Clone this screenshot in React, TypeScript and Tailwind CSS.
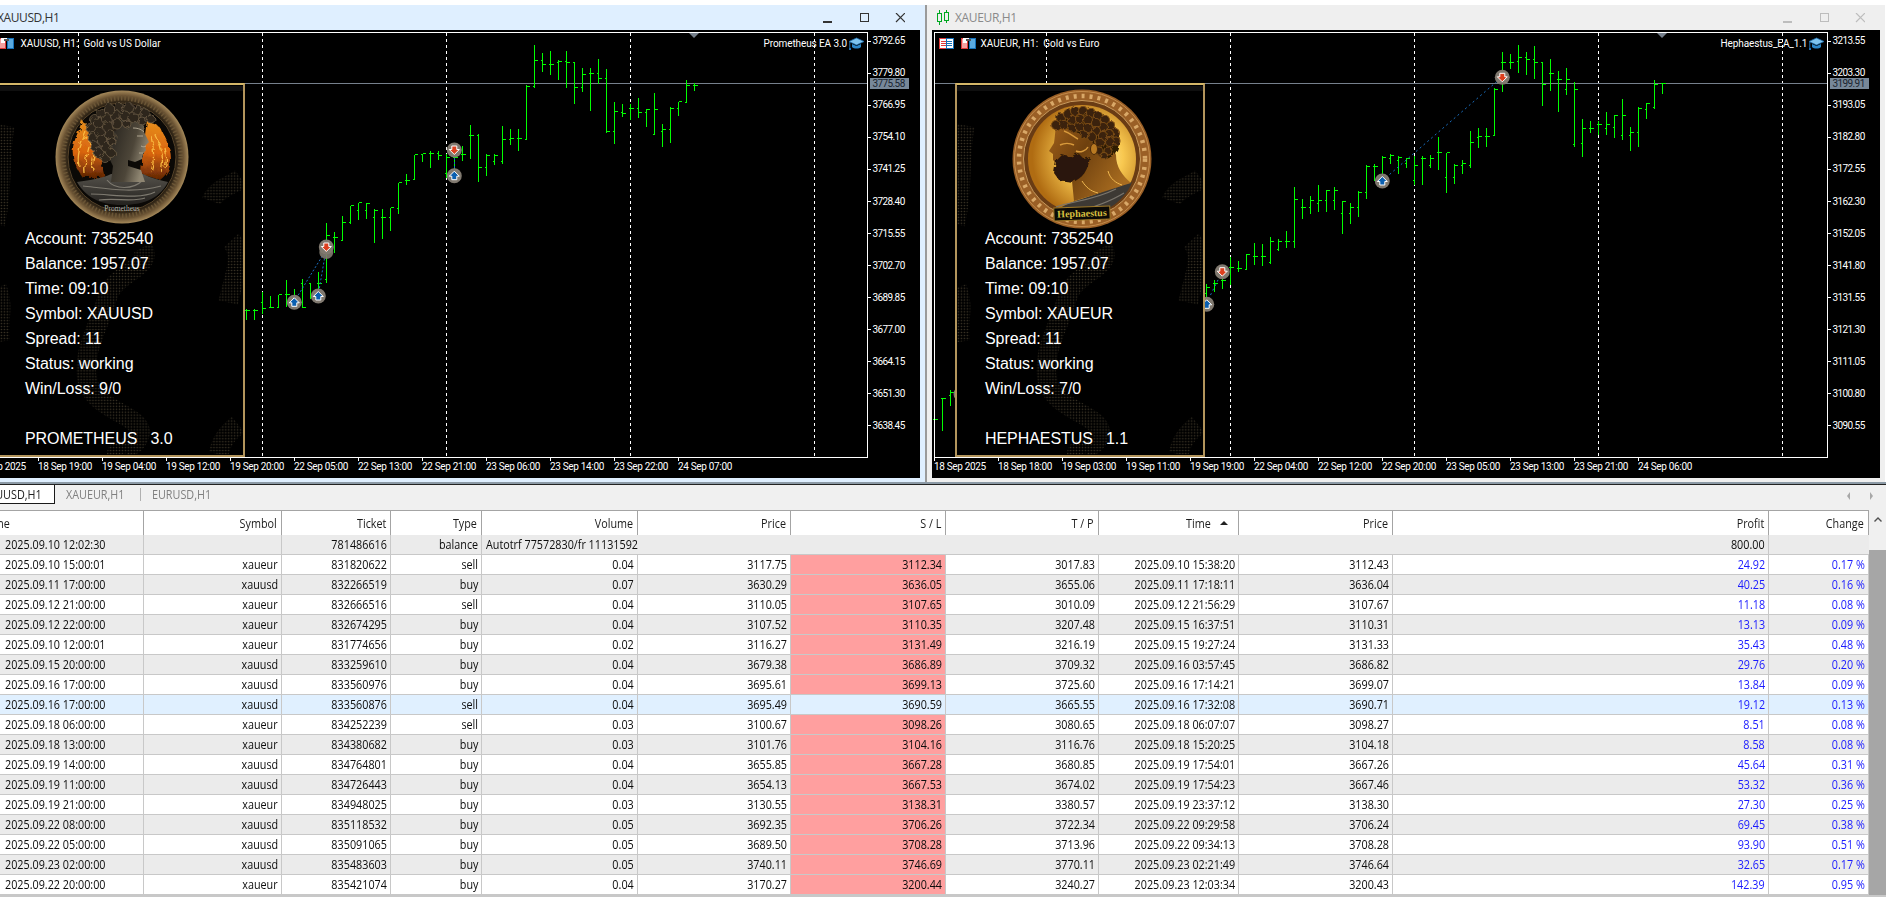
import React from "react";

type Bar = [number, number, number, number];

const leftBars: Bar[] = [
  [245,270,256,256],[237,307,305,255],[303,345,325,304],[318,425,388,325],[370,437,394,388],[276,403,403,326],[325,377,335,328],[292,352,325,337],[310,357,325,325],[310,347,335,340],[304,428,392,333],[205,395,235,392],[175,250,220,235],[200,329,220,220],[202,272,262,222],[182,308,186,262],[151,261,184,186],[178,236,186,184],[151,221,192,192],[156,212,180,192],[132,260,258,181],[252,417,416,258],[385,449,414,414],[385,431,418,414],[376,490,482,418],[460,491,482,465],[460,525,502,465],[400,542,405,502],[372,473,405,405],
  [435,480,462,462],[465,540,470,470],[460,530,520,470],[450,478,460,465],[450,500,460,460],[458,482,463,460],[463,538,538,463],[520,553,540,540],[545,638,625,545],[620,690,650,622],[625,713,650,650],[625,725,650,630],[605,655,630,608],[605,658,630,605],[615,670,665,615],[646,720,720,665],[693,755,712,712],[665,847,838,705],[813,865,850,850],[845,895,850,890],[835,922,850,922],[865,925,900,900],[838,918,882,882],[882,922,920,882],[885,922,920,920],[872,938,905,925],[925,958,930,930],[925,957,930,930],
];

const rightBars: Bar[] = [
  [245,278,250,250],[237,323,322,252],[307,353,327,310],[318,437,395,325],[378,449,406,395],[295,418,406,345],[342,410,380,345],[333,401,385,372],[360,402,372,372],[360,395,385,385],[354,467,430,385],[243,437,432,268],[202,282,268,238],[210,332,238,238],[175,270,218,218],[185,315,185,252],[135,233,178,185],[153,221,170,178],[132,215,184,170],[160,203,185,185],[153,272,187,187],[262,405,405,268],[382,437,407,407],[382,440,410,407],[390,500,495,425],[478,518,495,490],[490,548,532,495],[455,575,532,456],[408,506,456,456],[463,502,495,475],[465,552,475,475],[465,553,540,495],[470,500,490,475],
  [465,518,480,470],[460,490,475,465],[465,540,530,472],[490,540,498,498],[492,593,575,498],[570,648,620,575],[605,670,640,620],[600,700,640,603],[558,628,600,570],[568,632,600,570],[552,632,610,600],[585,640,620,600],[595,655,620,620],[558,740,722,598],[690,740,722,722],[715,750,748,722],[708,788,785,722],[730,795,768,768],[725,792,768,768],[760,808,808,762],[780,812,805,805],[768,852,800,800],[815,865,840,840],[838,872,850,850],[850,895,880,860],
];

const rightFarBars: Bar[] = [[1168,1215,1185,1175],[1192,1290,1195,1195],[1250,1290,1258,1258]];

const leftY = ["3792.65","3779.80","3766.95","3754.10","3741.25","3728.40","3715.55","3702.70","3689.85","3677.00","3664.15","3651.30","3638.45"];
const rightY = ["3213.55","3203.30","3193.05","3182.80","3172.55","3162.30","3152.05","3141.80","3131.55","3121.30","3111.05","3100.80","3090.55"];
const leftX = ["18 Sep 2025","18 Sep 19:00","19 Sep 04:00","19 Sep 12:00","19 Sep 20:00","22 Sep 05:00","22 Sep 13:00","22 Sep 21:00","23 Sep 06:00","23 Sep 14:00","23 Sep 22:00","24 Sep 07:00"];
const rightX = ["18 Sep 2025","18 Sep 18:00","19 Sep 03:00","19 Sep 11:00","19 Sep 19:00","22 Sep 04:00","22 Sep 12:00","22 Sep 20:00","23 Sep 05:00","23 Sep 13:00","23 Sep 21:00","24 Sep 06:00"];

const rows: string[][] = [
  ["2025.09.10 12:02:30","","781486616","balance","Autotrf 77572830/fr 11131592","","","","","","800.00",""],
  ["2025.09.10 15:00:01","xaueur","831820622","sell","0.04","3117.75","3112.34","3017.83","2025.09.10 15:38:20","3112.43","24.92","0.17 %"],
  ["2025.09.11 17:00:00","xauusd","832266519","buy","0.07","3630.29","3636.05","3655.06","2025.09.11 17:18:11","3636.04","40.25","0.16 %"],
  ["2025.09.12 21:00:00","xaueur","832666516","sell","0.04","3110.05","3107.65","3010.09","2025.09.12 21:56:29","3107.67","11.18","0.08 %"],
  ["2025.09.12 22:00:00","xaueur","832674295","buy","0.04","3107.52","3110.35","3207.48","2025.09.15 16:37:51","3110.31","13.13","0.09 %"],
  ["2025.09.10 12:00:01","xaueur","831774656","buy","0.02","3116.27","3131.49","3216.19","2025.09.15 19:27:24","3131.33","35.43","0.48 %"],
  ["2025.09.15 20:00:00","xauusd","833259610","buy","0.04","3679.38","3686.89","3709.32","2025.09.16 03:57:45","3686.82","29.76","0.20 %"],
  ["2025.09.16 17:00:00","xauusd","833560976","buy","0.04","3695.61","3699.13","3725.60","2025.09.16 17:14:21","3699.07","13.84","0.09 %"],
  ["2025.09.16 17:00:00","xauusd","833560876","sell","0.04","3695.49","3690.59","3665.55","2025.09.16 17:32:08","3690.71","19.12","0.13 %"],
  ["2025.09.18 06:00:00","xaueur","834252239","sell","0.03","3100.67","3098.26","3080.65","2025.09.18 06:07:07","3098.27","8.51","0.08 %"],
  ["2025.09.18 13:00:00","xaueur","834380682","buy","0.03","3101.76","3104.16","3116.76","2025.09.18 15:20:25","3104.18","8.58","0.08 %"],
  ["2025.09.19 14:00:00","xauusd","834764801","buy","0.04","3655.85","3667.28","3680.85","2025.09.19 17:54:01","3667.26","45.64","0.31 %"],
  ["2025.09.19 11:00:00","xauusd","834726443","buy","0.04","3654.13","3667.53","3674.02","2025.09.19 17:54:23","3667.46","53.32","0.36 %"],
  ["2025.09.19 21:00:00","xaueur","834948025","buy","0.03","3130.55","3138.31","3380.57","2025.09.19 23:37:12","3138.30","27.30","0.25 %"],
  ["2025.09.22 08:00:00","xauusd","835118532","buy","0.05","3692.35","3706.26","3722.34","2025.09.22 09:29:58","3706.24","69.45","0.38 %"],
  ["2025.09.22 05:00:00","xauusd","835091065","buy","0.05","3689.50","3708.28","3713.96","2025.09.22 09:34:13","3708.28","93.90","0.51 %"],
  ["2025.09.23 02:00:00","xauusd","835483603","buy","0.05","3740.11","3746.69","3770.11","2025.09.23 02:21:49","3746.64","32.65","0.17 %"],
  ["2025.09.22 20:00:00","xaueur","835421074","buy","0.04","3170.27","3200.44","3240.27","2025.09.23 12:03:34","3200.43","142.39","0.95 %"],
];

const headers = ["Time","Symbol","Ticket","Type","Volume","Price","S / L","T / P","Time","Price","Profit","Change"];
const grid = "grid grid-cols-[144px_138px_109px_91px_156px_153px_155px_153px_140px_154px_376px_100px]";

function Bars({ x0, data }: { x0: number; data: Bar[] }) {
  return (
    <g stroke="#00ff00" strokeWidth="1" shapeRendering="crispEdges">
      {data.map((b, i) => {
        const x = x0 - i * 8 + 0.5;
        const [h, l, o, c] = b.map((v) => Math.round(v / 3) + 0.5);
        return <path key={i} d={`M${x} ${h}V${l}M${x - 2} ${o}H${x}M${x} ${c}H${x + 3}`} />;
      })}
    </g>
  );
}

function Marker({ x, y, kind }: { x: number; y: number; kind: "buy" | "sell" }) {
  return (
    <g transform={`translate(${x} ${y})`}>
      <circle r="7.5" fill="#80796f" />
      {kind === "sell" ? (
        <polygon points="-2.5,-4 2.5,-4 2.5,-0.5 5,-0.5 0,4.5 -5,-0.5 -2.5,-0.5" fill="#dc3f1e" stroke="#ffffff" strokeWidth="1" />
      ) : (
        <polygon points="-2.5,4 2.5,4 2.5,0.5 5,0.5 0,-4.5 -5,0.5 -2.5,0.5" fill="#0a5fb0" stroke="#ffffff" strokeWidth="1" />
      )}
    </g>
  );
}

function Hat({ x, y }: { x: number; y: number }) {
  return (
    <g transform={`translate(${x} ${y})`}>
      <polygon points="7.5,0 15,3.5 7.5,7 0,3.5" fill="#7fc4ee" stroke="#1d6fb0" strokeWidth="0.8" />
      <path d="M3 6V9C5 11 10 11 12 9V6L7.5 8Z" fill="#2b86c8" />
      <path d="M0.8 4V10" stroke="#1d6fb0" strokeWidth="1" />
      <rect x="0" y="10" width="2" height="2" fill="#1d6fb0" />
    </g>
  );
}

function PairIcon({ x, y }: { x: number; y: number }) {
  return (
    <g transform={`translate(${x} ${y})`} shapeRendering="crispEdges">
      <rect x="0.5" y="0.5" width="6" height="10" fill="#f4a0a0" stroke="#e03a3a" />
      <rect x="2" y="0" width="4" height="5" fill="#ffffff" />
      <rect x="4" y="0" width="7" height="3" fill="#ffffff" />
      <rect x="8.5" y="0.5" width="6" height="10" fill="#5aaae0" stroke="#1470b8" />
      <rect x="5" y="1" width="5" height="2" fill="#555555" />
    </g>
  );
}

function TableIcon({ x, y }: { x: number; y: number }) {
  return (
    <g transform={`translate(${x} ${y})`} shapeRendering="crispEdges">
      <rect x="0.5" y="0.5" width="7" height="10" fill="#ffffff" stroke="#e03a3a" />
      <rect x="7.5" y="0.5" width="7" height="10" fill="#ffffff" stroke="#1470b8" />
      <path d="M2 3.5H7M2 5.5H7M2 7.5H7" stroke="#e03a3a" />
      <path d="M8 3.5H13M8 5.5H13M8 7.5H13" stroke="#1470b8" />
    </g>
  );
}

function Chart({
  vb, plotLeft, plotRight, dashes, yLabels, xLabels, xTicks, price, title, titleX, ea, eaX, hatX, tri, children,
}: {
  vb: string; plotLeft: number; plotRight: number; dashes: number[]; yLabels: string[]; xLabels: string[]; xTicks: number[];
  price: string; title: string; titleX: number; ea: string; eaX: number; hatX: number; tri: number; children: React.ReactNode;
}) {
  const axisFont = "font-['Roboto'] text-[10px] fill-white";
  return (
    <svg viewBox={vb} className="absolute inset-0 w-full h-full">
      <g stroke="#ffffff" strokeDasharray="3 3" shapeRendering="crispEdges">
        {dashes.map((x) => (
          <path key={x} d={`M${x + 0.5} 33V456`} />
        ))}
      </g>
      <path d={`M${plotLeft} 83.5H${plotRight}`} stroke="#76808c" shapeRendering="crispEdges" />
      {children}
      <polygon points={`${tri - 5},33 ${tri + 5},33 ${tri},38`} fill="#76808c" />
      <g stroke="#ffffff" fill="none" shapeRendering="crispEdges">
        <path d={`M${plotLeft} 32.5H${plotRight + 0.5}V457.5H${plotLeft}`} />
        {plotLeft > 100 && <path d={`M${plotLeft + 0.5} 32V458`} />}
        {yLabels.map((_, i) => (
          <path key={i} d={`M${plotRight} ${Math.round(40.5 + i * 32.07) + 0.5}h4`} />
        ))}
        {xTicks.map((x) => (
          <path key={x} d={`M${x + 0.5} 458v3`} />
        ))}
      </g>
      {yLabels.map((t, i) => (
        <text key={t} x={plotRight + 5.5} y={40.5 + i * 32.07 + 3.7} className={`${axisFont} tracking-[-0.6px]`}>{t}</text>
      ))}
      {xLabels.map((t, i) => (
        <text key={t} x={xTicks[i]} y={469.7} className={`${axisFont} tracking-[-0.33px]`}>{t}</text>
      ))}
      <rect x={plotRight + 3} y="78" width="39" height="11" fill="#778899" />
      <text x={plotRight + 5.5} y="87.2" className="font-['Roboto'] text-[10px] tracking-[-0.6px] fill-[#1a2430]">{price}</text>
      <text x={titleX} y="47" className="font-['Roboto'] text-[10px] fill-white tracking-[0.05px]">{title}</text>
      <text x={eaX} y="47" className="font-['Roboto'] text-[10px] fill-white tracking-[-0.1px]">{ea}</text>
      <Hat x={hatX} y={38} />
    </svg>
  );
}

function WaveDecor({ id }: { id: string }) {
  const paths = [
    "M148 164C160 185 118 190 112 215S85 270 92 300S150 335 145 354S120 365 122 375",
    "M238 157C252 172 240 195 235 220",
    "M245 344C235 352 228 360 225 374",
    "M218 117C222 105 240 100 248 94",
    "M0 205C8 225 0 240 3 260",
    "M8 40C2 70 6 110 -2 140",
  ];
  return (
    <svg viewBox="0 0 250 374" className="absolute inset-0 w-full h-full" fill="none">
      <defs>
        <pattern id={id} width="3" height="3" patternUnits="userSpaceOnUse">
          <circle cx="1.5" cy="1.5" r="0.8" fill="#6e6248" />
        </pattern>
      </defs>
      {paths.map((d) => (
        <path key={d} d={d} stroke={`url(#${id})`} strokeWidth="20" opacity="0.55" />
      ))}
      <rect x="0" y="0" width="250" height="5" fill="#111111" />
    </svg>
  );
}

const promHair: [number, number, number][] = [
  [40,30,5.5],[47,24,5.5],[55,20,5.5],[64,18,5.5],[73,18,5.5],[82,20,5],[90,24,5],[96,29,4],[37,38,5.5],[44,33,5.5],[52,29,5.5],[61,26,5.5],[70,26,5],[79,28,5],[87,31,4],[38,47,5.5],[45,42,5.5],[53,37,5.5],[62,34,5],[72,34,4],[40,56,5],[47,50,5.5],[55,45,5],[44,63,5],[51,57,5],[50,68,4.5],[56,63,4.5],[57,52,4],
];

function PromCoin() {
  return (
    <svg viewBox="0 0 134 134" className="absolute left-[58px] top-[5px] w-[134px] h-[134px]">
      <defs>
        <radialGradient id="pr" cx="50%" cy="50%" r="50%">
          <stop offset="80%" stopColor="#1e170d" />
          <stop offset="92%" stopColor="#6a5233" />
          <stop offset="100%" stopColor="#a5895a" />
        </radialGradient>
        <linearGradient id="pf" x1="0" y1="0" x2="0" y2="1">
          <stop offset="0%" stopColor="#e8901c" />
          <stop offset="55%" stopColor="#d8640f" />
          <stop offset="100%" stopColor="#5e2404" />
        </linearGradient>
        <linearGradient id="pd" x1="0" y1="0" x2="1" y2="0.4">
          <stop offset="0%" stopColor="#1e1b17" />
          <stop offset="70%" stopColor="#4d4639" />
          <stop offset="100%" stopColor="#8f8672" />
        </linearGradient>
        <linearGradient id="pc" x1="0" y1="0" x2="0" y2="1">
          <stop offset="0%" stopColor="#55524b" />
          <stop offset="100%" stopColor="#24221f" />
        </linearGradient>
        <filter id="rough" x="-10%" y="-10%" width="120%" height="120%">
          <feTurbulence type="fractalNoise" baseFrequency="0.18" numOctaves="2" seed="4" />
          <feDisplacementMap in="SourceGraphic" scale="6" />
        </filter>
      </defs>
      <circle cx="67" cy="67" r="66.5" fill="url(#pr)" />
      <circle cx="67" cy="67" r="59" fill="none" stroke="#6b5636" strokeWidth="5" strokeDasharray="1.5 2" />
      <circle cx="67" cy="67" r="54" fill="#0b0906" stroke="#57442a" strokeWidth="1" />
      <g filter="url(#rough)">
        <path d="M18 66C16 52 24 44 27 30C31 38 34 34 38 30L46 72L50 88L28 88C24 82 19 76 18 66Z" fill="url(#pf)" />
        <path d="M24 76C21 64 27 52 31 42M30 84C28 70 35 60 36 46M38 80C36 70 40 62 42 56" stroke="#f8b840" strokeWidth="1.3" fill="none" />
        <path d="M92 30C98 36 104 32 107 42C114 54 118 66 115 76C113 82 110 86 105 90L86 84L88 60Z" fill="url(#pf)" />
        <path d="M100 44C105 54 110 66 106 82M96 46C99 58 100 70 96 82M110 58C112 66 112 72 110 78" stroke="#f8b840" strokeWidth="1.3" fill="none" />
      </g>
      <path d="M22 92C36 90 48 88 56 84L88 84C96 88 104 90 113 92C106 106 92 115 67 115C44 115 30 106 22 92Z" fill="url(#pc)" />
      <path d="M28 96C48 98 78 104 106 96M36 104C56 104 84 110 100 102M52 90C60 100 78 100 88 90M44 110C60 108 80 112 90 108" stroke="#7e7a70" strokeWidth="1.2" fill="none" />
      <path d="M62 28L84 30L89 36L89 42L94 52L90 56L91 60L88 64L87 69L80 72L73 70L73 76L86 80L90 92L56 92L58 76L50 60Z" fill="url(#pd)" />
      <path d="M78 38C84 38 87 40 89 42M82 46C84 46 86 46 88 46M86 56C88 57 89 57 91 56M84 63C86 63 87 63 88 63" stroke="#b8ae98" strokeWidth="0.9" fill="none" />
      <g filter="url(#rough)">
        <path d="M36 40C38 24 56 14 72 14C86 14 96 22 99 30L86 32L66 30L60 42L56 62L50 70L42 66C36 58 34 50 36 40Z" fill="#2a2219" />
        {promHair.map(([x, y, r]) => (
          <circle key={`${x}-${y}`} cx={x} cy={y} r={r} fill="#2d251b" stroke="#6e5e48" strokeWidth="0.8" />
        ))}
      </g>
      <text x="67" y="121" textAnchor="middle" className="font-['Liberation_Serif'] text-[7.5px] fill-[#b4b4ac]">Prometheus</text>
    </svg>
  );
}

const hephHair: [number, number, number][] = [
  [44,36,4.5],[49,29,4.5],[56,25,4.5],[63,22,4.5],[71,22,4.5],[79,24,4.5],[86,27,4.5],[93,31,4.5],[99,37,4.5],[103,44,4.5],[104,52,4],[52,36,4.5],[60,31,4.5],[68,30,4.5],[76,31,4.5],[84,34,4.5],[91,38,4.5],[97,45,4.5],[98,53,4.5],[96,62,4],[60,39,4],[68,38,4.5],[76,39,4.5],[84,42,4.5],[91,47,4.5],[72,46,4],[80,48,4.5],[88,54,4.5],[87,62,4],[92,67,3.5],
];

function HephCoin() {
  return (
    <svg viewBox="0 0 140 140" className="absolute left-[55px] top-[4px] w-[140px] h-[140px]">
      <defs>
        <radialGradient id="hc" cx="62%" cy="48%" r="58%">
          <stop offset="0%" stopColor="#fff2ae" />
          <stop offset="45%" stopColor="#f8c850" />
          <stop offset="100%" stopColor="#b06c12" />
        </radialGradient>
        <linearGradient id="hf" x1="0" y1="0" x2="1" y2="0.6">
          <stop offset="0%" stopColor="#a0601a" />
          <stop offset="45%" stopColor="#6e400e" />
          <stop offset="100%" stopColor="#a86c20" />
        </linearGradient>
        <filter id="roughh" x="-10%" y="-10%" width="120%" height="120%">
          <feTurbulence type="fractalNoise" baseFrequency="0.2" numOctaves="2" seed="7" />
          <feDisplacementMap in="SourceGraphic" scale="4" />
        </filter>
      </defs>
      <circle cx="70" cy="70" r="69.5" fill="#9a5f26" />
      <circle cx="70" cy="70" r="67.5" fill="none" stroke="#c48c4c" strokeWidth="1" />
      <circle cx="70" cy="70" r="63" fill="none" stroke="#d9a868" strokeWidth="4.5" strokeDasharray="3 5" />
      <circle cx="70" cy="70" r="58.5" fill="#6a3c14" stroke="#c99a5c" strokeWidth="1" />
      <circle cx="70" cy="70" r="54" fill="url(#hc)" />
      <path d="M44 122C56 112 74 110 96 100L120 93C114 110 96 124 72 128Z" fill="#3d3934" />
      <path d="M44 118C60 112 80 112 104 100M60 124C76 120 96 114 112 104" stroke="#7a756c" strokeWidth="1.2" fill="none" />
      <path d="M44 36C43 44 43 48 42 54L37 62L41 65L41 71L44 74L44 84L50 92L60 92L62 112C76 108 100 100 119 94C110 86 104 78 104 66L92 36Z" fill="url(#hf)" />
      <path d="M52 42C58 44 62 48 66 50M48 56C52 54 58 54 62 56M64 62C68 64 74 62 76 58" stroke="#d89a3c" strokeWidth="1.4" fill="none" />
      <path d="M70 92C74 98 78 102 86 104M96 82C98 90 104 94 110 96" stroke="#f0b850" strokeWidth="1" fill="none" />
      <g filter="url(#roughh)">
        <path d="M44 72L42 84L47 91L60 93C70 90 76 82 78 68L72 70L66 64L58 68L50 66Z" fill="#2c1808" />
        <path d="M41 37C44 26 58 20 72 20C90 22 104 34 107 50C108 60 102 68 94 70L86 66L80 52L70 46L58 40L44 40Z" fill="#2e1b06" />
        {hephHair.map(([x, y, r]) => (
          <circle key={`${x}-${y}`} cx={x} cy={y} r={r} fill="#3a2208" stroke="#7a4c16" strokeWidth="1.1" />
        ))}
      </g>
      <ellipse cx="82" cy="60" rx="3.5" ry="5.5" fill="#b97a22" stroke="#4a2a0a" />
      <g transform="rotate(-2 70 125)">
        <rect x="42" y="118" width="56" height="13" fill="#0b0a06" stroke="#a07a28" />
        <text x="70" y="127.7" textAnchor="middle" className="font-['Liberation_Serif'] text-[10px] font-bold fill-[#d8c040]">Hephaestus</text>
      </g>
    </svg>
  );
}

function Panel({ lines, left, id, children }: { lines: string[]; left: string; id: string; children: React.ReactNode }) {
  return (
    <div className={`absolute top-[53px] h-[374px] w-[250px] border-2 border-[#b3955c] border-t-[#d4b768] bg-black ${left}`}>
      <WaveDecor id={id} />
      {children}
      <div className="relative pl-[28px] pt-[141px] font-['Liberation_Sans'] text-[16px] leading-[25px] tracking-[-0.06px] text-white">
        {lines.map((l, i) => (
          <div key={i} className="h-[25px] whitespace-pre">{l}</div>
        ))}
      </div>
    </div>
  );
}

function WinBtns({ color }: { color: string }) {
  return (
    <svg viewBox="0 0 82 10" className="w-[82px] h-[10px]" fill="none" stroke={color} strokeWidth="1.2" shapeRendering="crispEdges">
      <path d="M0 9H9" />
      <rect x="37.5" y="0.5" width="8" height="8" />
      <path d="M73 0L82 9M82 0L73 9" shapeRendering="auto" />
    </svg>
  );
}

const squeezeL = "inline-block origin-left scale-x-[0.83] whitespace-nowrap";
const squeezeR = "inline-block origin-right scale-x-[0.83] whitespace-nowrap";

function Row({ r, i }: { r: string[]; i: number }) {
  const selected = i === 8;
  const bg = selected ? "bg-[#e0f0ff]" : i % 2 === 0 ? "bg-[#ebebeb]" : "bg-white";
  return (
    <div className={`${grid} h-[20px] border-b border-[#c8c8c8] ${bg}`}>
      {r.map((c, j) => {
        const pink = j === 6 && i !== 0 && !selected;
        const blue = (j === 10 || j === 11) && i !== 0;
        const auto = i === 0 && j === 4;
        const base = `h-[19px] leading-[19px] border-r border-[#c8c8c8] ${blue ? "text-[#1a1aff]" : "text-[#0c0c0c]"} ${pink ? "bg-[#ff9f9f]" : ""}`;
        if (j === 0) {
          return (
            <div key={j} className={`${base} pl-[5px]`}>
              <span className={squeezeL}>{c}</span>
            </div>
          );
        }
        if (auto) {
          return (
            <div key={j} className="h-[19px] leading-[19px] pl-[4px] text-[#0c0c0c] relative z-10">
              <span className={squeezeL}>{c}</span>
            </div>
          );
        }
        return (
          <div key={j} className={`${base} text-right pr-[3px] ${i === 0 && j > 4 && j !== 10 ? "border-r-0" : ""}`}>
            <span className={squeezeR}>{c}</span>
          </div>
        );
      })}
    </div>
  );
}

export default function App() {
  const leftXTicks = Array.from({ length: 12 }, (_, i) => -26 + i * 64);
  const rightXTicks = Array.from({ length: 12 }, (_, i) => 934 + i * 64);
  return (
    <div className="w-[1886px] h-[897px] overflow-hidden bg-white flex flex-col font-['Open_Sans'] text-[13px]">
      <div className="h-[5px] shrink-0" />
      <div className="flex h-[477px] shrink-0">
        <div className="w-[925px] flex flex-col bg-[#dfefff]">
          <div className="h-[25px] flex items-center justify-between pr-[20px] pl-[0px]">
            <span className="ml-[-3px] text-[12px] tracking-[-0.4px] text-[#333333]">XAUUSD,H1</span>
            <WinBtns color="#333333" />
          </div>
          <div className="relative w-[920px] h-[448px] bg-black overflow-hidden">
            <Chart
              vb="0 30 920 448" plotLeft={0} plotRight={867} dashes={[78, 262, 446, 630, 814]} yLabels={leftY} xLabels={leftX} xTicks={leftXTicks}
              price="3775.58" title={"XAUUSD, H1:\u00a0\u00a0Gold vs US Dollar"} titleX={20.5} ea="Prometheus EA 3.0" eaX={763.5} hatX={849} tri={694}
            >
              <Bars x0={694} data={leftBars} />
              <path d="M294 302L326 250M318 296L326 250M454.5 150V176" stroke="#1a6fc0" strokeDasharray="2 2" fill="none" />
              <Marker x={454.3} y={150} kind="sell" />
              <Marker x={454.3} y={175.7} kind="buy" />
              <circle cx="326.3" cy="252" r="7" fill="#80796f" opacity="0.9" />
              <Marker x={326.3} y={247} kind="sell" />
              <Marker x={294.3} y={302.3} kind="buy" />
              <Marker x={318.3} y={296} kind="buy" />
              <PairIcon x={-1} y={38} />
            </Chart>
            <Panel
              id="dl"
              left="left-[-5px]"
              lines={["Account: 7352540","Balance: 1957.07","Time: 09:10","Symbol: XAUUSD","Spread: 11","Status: working","Win/Loss: 9/0","","PROMETHEUS   3.0"]}
            >
              <PromCoin />
            </Panel>
          </div>
        </div>
        <div className="w-[960px] flex flex-col border-l-[2px] border-[#9a9a9a] bg-[#efefef]">
          <div className="h-[25px] flex items-center justify-between pl-[10px] pr-[20px]">
            <div className="flex items-center gap-[6px]">
              <svg viewBox="0 0 12 15" className="w-[12px] h-[15px]" fill="none" stroke="#00a820" strokeWidth="1.2" shapeRendering="crispEdges">
                <path d="M2.5 0V15M9.5 0V13" />
                <rect x="0.5" y="3.5" width="4" height="8" fill="#efefef" />
                <rect x="7.5" y="2.5" width="4" height="8" fill="#efefef" />
              </svg>
              <span className="text-[12px] tracking-[-0.35px] text-[#8a8a8a]">XAUEUR,H1</span>
            </div>
            <WinBtns color="#bdbdbd" />
          </div>
          <div className="ml-[5px] relative w-[948px] h-[448px] bg-black overflow-hidden">
            <Chart
              vb="932 30 948 448" plotLeft={934} plotRight={1827} dashes={[1046, 1230, 1414, 1598, 1782]} yLabels={rightY} xLabels={rightX} xTicks={rightXTicks}
              price="3199.91" title={"XAUEUR, H1:\u00a0\u00a0Gold vs Euro"} titleX={980.5} ea="Hephaestus_EA_1.1" eaX={1720.5} hatX={1809} tri={1662}
            >
              <Bars x0={1662} data={rightBars} />
              <Bars x0={950} data={rightFarBars} />
              <path d="M1382 181L1502 77M1206 304L1222 272" stroke="#1a6fc0" strokeDasharray="2 3" fill="none" />
              <Marker x={1382.3} y={181} kind="buy" />
              <Marker x={1502.3} y={77.3} kind="sell" />
              <Marker x={1222.3} y={271.7} kind="sell" />
              <Marker x={1206.7} y={304.3} kind="buy" />
              <circle cx="961" cy="394" r="7.5" fill="#80796f" />
              <TableIcon x={939} y={38} />
              <PairIcon x={960.5} y={38} />
            </Chart>
            <Panel
              id="dr"
              left="left-[23px]"
              lines={["Account: 7352540","Balance: 1957.07","Time: 09:10","Symbol: XAUEUR","Spread: 11","Status: working","Win/Loss: 7/0","","HEPHAESTUS   1.1"]}
            >
              <HephCoin />
            </Panel>
          </div>
        </div>
      </div>
      <div className="h-[2px] shrink-0 bg-[#8c9aa6]" />
      <div className="h-[1px] shrink-0 bg-[#222222]" />
      <div className="h-[25px] shrink-0 bg-[#f0f0f0] flex items-start relative">
        <div className="w-[55px] h-[19px] bg-white border-r border-b border-[#1a1a1a] flex justify-end pr-[12px] leading-[18px] text-[#222222]">
          <span className={squeezeR}>XAUUSD,H1</span>
        </div>
        <div className="h-[19px] w-[85px] leading-[19px] pl-[11px] text-[#808080]">
          <span className={squeezeL}>XAUEUR,H1</span>
        </div>
        <div className="mt-[3px] h-[13px] w-px bg-[#b0b0b0]" />
        <div className="h-[19px] leading-[19px] pl-[11px] text-[#808080]">
          <span className={squeezeL}>EURUSD,H1</span>
        </div>
        <svg viewBox="0 0 26 8" className="absolute right-[13px] top-[7px] w-[26px] h-[8px]" fill="#a8a8a8">
          <polygon points="3,0 3,8 0,4" />
          <polygon points="23,0 23,8 26,4" />
        </svg>
      </div>
      <div className="flex shrink-0 grow overflow-hidden">
        <div className="w-[1869px] shrink-0">
          <div className={`${grid} h-[25px] bg-white border-t border-[#a4a4a4]`}>
            {headers.map((h, j) => (
              <div key={j} className={`h-[24px] leading-[24px] border-r border-[#a4a4a4] text-[#1c1c1c] ${j === 0 ? "pl-0" : "text-right pr-[4px]"} ${j === 8 ? "pr-[27px] relative" : ""}`}>
                {j === 0 ? (
                  <span className="inline-block origin-left scale-x-[0.83] ml-[-15px]">{h}</span>
                ) : (
                  <span className={squeezeR}>{h}</span>
                )}
                {j === 8 && (
                  <svg viewBox="0 0 8 4" className="absolute right-[10px] top-[10px] w-[8px] h-[4px]" fill="#222222">
                    <polygon points="0,4 8,4 4,0" />
                  </svg>
                )}
              </div>
            ))}
          </div>
          {rows.map((r, i) => (
            <Row key={i} r={r} i={i} />
          ))}
        </div>
        <div className="w-[17px] bg-[#f0f0f0] flex flex-col">
          <div className="h-[40px] flex justify-center pt-[7px]">
            <svg viewBox="0 0 8 5" className="w-[8px] h-[5px]" fill="none" stroke="#505050" strokeWidth="1.4">
              <path d="M0.5 4.5L4 1L7.5 4.5" />
            </svg>
          </div>
          <div className="grow bg-[#a6a6a6]" />
        </div>
      </div>
      <div className="h-[2px] shrink-0 bg-[#c8c8c8]" />
    </div>
  );
}
